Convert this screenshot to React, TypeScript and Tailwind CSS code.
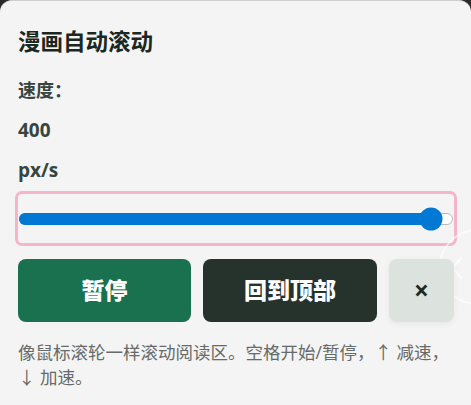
import React from "react";

const cjk = "font-['Open_Sans','Noto_Sans_CJK_SC',sans-serif]";

const SpeedSlider = ({ value, min, max }: { value: number; min: number; max: number }) => {
  const pct = ((value - min) / (max - min)) * 100;
  return (
    <div className="mx-[-3px] mt-[9px] h-[55px] rounded-[7px] border-[3px] border-[#f6b4c9] flex items-center px-[1px]">
      <div className="relative w-full h-[12px]">
        {/* track */}
        <div className="absolute inset-0 rounded-full bg-white border border-[#b9b9b9]" />
        <div
          className="absolute left-0 top-0 h-full rounded-full bg-[#0078d4]"
          style={{ width: `${pct}%` }}
        />
        {/* thumb */}
        <div
          className="absolute top-1/2 w-[23px] h-[23px] -translate-x-1/2 -translate-y-1/2 rounded-full bg-[#0078d4]"
          style={{ left: `${pct}%` }}
        />
      </div>
    </div>
  );
};

export default function App() {
  return (
    <div className={`min-h-[405px] bg-[#2a2a2a] ${cjk}`}>
      <div className="relative min-h-[405px] overflow-hidden rounded-t-[12px] border-t border-[#cfcfcf] bg-[#f4f4f4] pt-[26px] pl-[18px] pr-[17px]">
        {/* faint carousel arrow behind */}
        <div className="absolute right-[-44px] top-[228px] w-[76px] h-[76px] rounded-full border-2 border-white/60">
          <svg viewBox="0 0 20 40" className="absolute left-[10px] top-[22px] w-[12px] h-[30px]">
            <polyline points="18,2 3,20 18,38" fill="none" stroke="white" strokeOpacity="0.8" strokeWidth="3" />
          </svg>
        </div>

        <h2 className="text-[22.5px] leading-[30px] font-bold text-[#1b2822]">漫画自动滚动</h2>

        <div className="mt-[21px] text-[18px] leading-[24px] font-bold text-[#36453e]">速度：</div>
        <div className="mt-[16px] text-[19px] leading-[24px] font-bold text-[#36453e]">400</div>
        <div className="mt-[16px] text-[19px] leading-[24px] font-bold text-[#36453e]">px/s</div>

        {/* slider */}
        <SpeedSlider value={1900} min={0} max={2000} />

        {/* buttons */}
        <div className="relative mt-[13px] flex gap-[12px]">
          <button className="h-[63px] w-[173px] rounded-[8px] bg-[#1a7150] text-white text-[23px] font-black">
            暂停
          </button>
          <button className="h-[63px] w-[174px] rounded-[8px] bg-[#25332c] text-white text-[23px] font-black">
            回到顶部
          </button>
          <button className="h-[63px] w-[65px] rounded-[8px] bg-[#dce3df] text-[#1e2a24] text-[26px] font-bold shadow-[0_2px_6px_rgba(0,0,0,0.06)]">
            ×
          </button>
        </div>

        {/* help */}
        <p className="mt-[18px] text-[17.5px] leading-[25px] text-[#666a68]">
          像鼠标滚轮一样滚动阅读区。空格开始/暂停，↑ 减速，
          <br />↓ 加速。
        </p>
      </div>
    </div>
  );
}
